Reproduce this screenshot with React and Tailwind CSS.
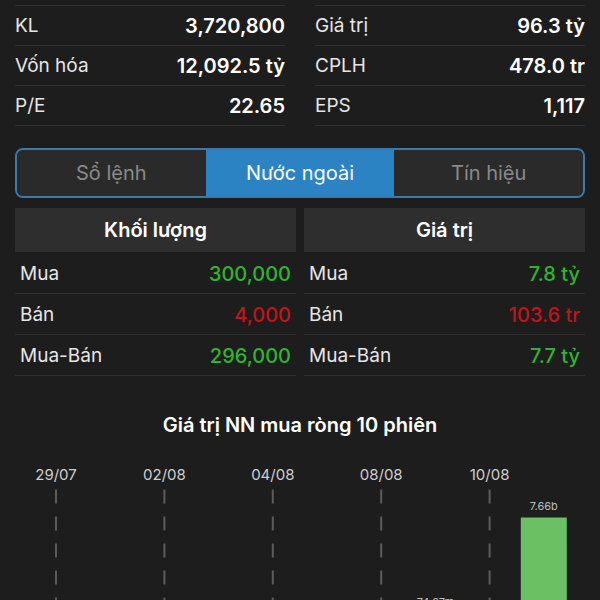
import React from "react";

const top = [
  [["KL", "3,720,800"], ["Giá trị", "96.3 tỷ"]],
  [["Vốn hóa", "12,092.5 tỷ"], ["CPLH", "478.0 tr"]],
  [["P/E", "22.65"], ["EPS", "1,117"]],
];

const left = [
  ["Mua", "300,000", "text-[#2db52f]"],
  ["Bán", "4,000", "text-[#c2141b]"],
  ["Mua-Bán", "296,000", "text-[#2db52f]"],
];
const right = [
  ["Mua", "7.8 tỷ", "text-[#2db52f]"],
  ["Bán", "103.6 tr", "text-[#c2141b]"],
  ["Mua-Bán", "7.7 tỷ", "text-[#2db52f]"],
];

function Chart() {
  const cx = (i) => 56 + 54.2 * i;
  const dates = ["29/07", "02/08", "04/08", "08/08", "10/08"];
  return (
    <svg width="600" height="146" viewBox="0 0 600 146" className="block">
      {dates.map((d, k) => (
        <g key={d}>
          <text
            x={cx(k * 2)}
            y={24}
            textAnchor="middle"
            fill="#cfcfcf"
            fontSize="15"
            fontFamily="Inter, sans-serif"
          >
            {d}
          </text>
          <line
            x1={cx(k * 2)}
            x2={cx(k * 2)}
            y1={33.5}
            y2={146}
            stroke="#5c5c5c"
            strokeWidth="2"
            strokeDasharray="14 13"
          />
        </g>
      ))}
      <text x={cx(9)} y={54} textAnchor="middle" fill="#bdbdbd" fontSize="11" fontFamily="Inter, sans-serif">
        7.66b
      </text>
      <rect x={cx(9) - 23} y={61.5} width="46" height="90" fill="#6bc064" />
      <text x={cx(7)} y={150} textAnchor="middle" fill="#bdbdbd" fontSize="11" fontFamily="Inter, sans-serif">
        74.67m
      </text>
    </svg>
  );
}

export default function App() {
  return (
    <div
      className="w-[600px] h-[600px] overflow-hidden bg-[#1d1d1d] text-[#ececec]"
      style={{ fontFamily: "Inter, 'Noto Sans', sans-serif" }}
    >
      <div className="px-[15px]">
        <div className="grid grid-cols-2 gap-x-[30px]">
          <div className="h-[6px] border-b border-[#2f2f2f]" />
          <div className="h-[6px] border-b border-[#2f2f2f]" />
          {top.map((row, r) =>
            row.map(([l, v], c) => (
              <div
                key={r + "-" + c}
                className="h-[40px] pt-[1px] flex items-center justify-between border-b border-[#2f2f2f]"
              >
                <span className="text-[#e6e6e6] text-[19px]">{l}</span>
                <span className="font-semibold text-white text-[20px]">{v}</span>
              </div>
            ))
          )}
        </div>

        <div className="mt-[22px] h-[50px] rounded-[8px] border-2 border-[#3b79ad] overflow-hidden grid grid-cols-3 text-[20px]">
          <div className="bg-[#2a2a2a] flex items-center justify-center text-[#8a8a8a]">Sổ lệnh</div>
          <div className="bg-[#2b83c4] flex items-center justify-center text-white">Nước ngoài</div>
          <div className="bg-[#2a2a2a] flex items-center justify-center text-[#8a8a8a]">Tín hiệu</div>
        </div>

        <div className="mt-[10px] grid grid-cols-2 gap-x-[8px]">
          {[["Khối lượng", left], ["Giá trị", right]].map(([title, rows]) => (
            <div key={title}>
              <div className="h-[44px] bg-[#2e2e2e] flex items-center justify-center font-semibold text-[20px] text-white">
                {title}
              </div>
              {rows.map(([l, v, col], i) => (
                <div
                  key={l}
                  className={
                    (i === 0 ? "h-[42px] pt-[3px]" : "h-[41px] pt-[2px]") +
                    " px-[5px] flex items-center justify-between border-b border-[#2f2f2f]"
                  }
                >
                  <span className="text-[#e6e6e6] text-[19px]">{l}</span>
                  <span className={"font-medium text-[20px] " + col}>{v}</span>
                </div>
              ))}
            </div>
          ))}
        </div>
      </div>

      <div className="mt-[34px] text-center font-semibold text-[20px] text-white">
        Giá trị NN mua ròng 10 phiên
      </div>
      <div className="mt-[16px]">
        <Chart />
      </div>
    </div>
  );
}
